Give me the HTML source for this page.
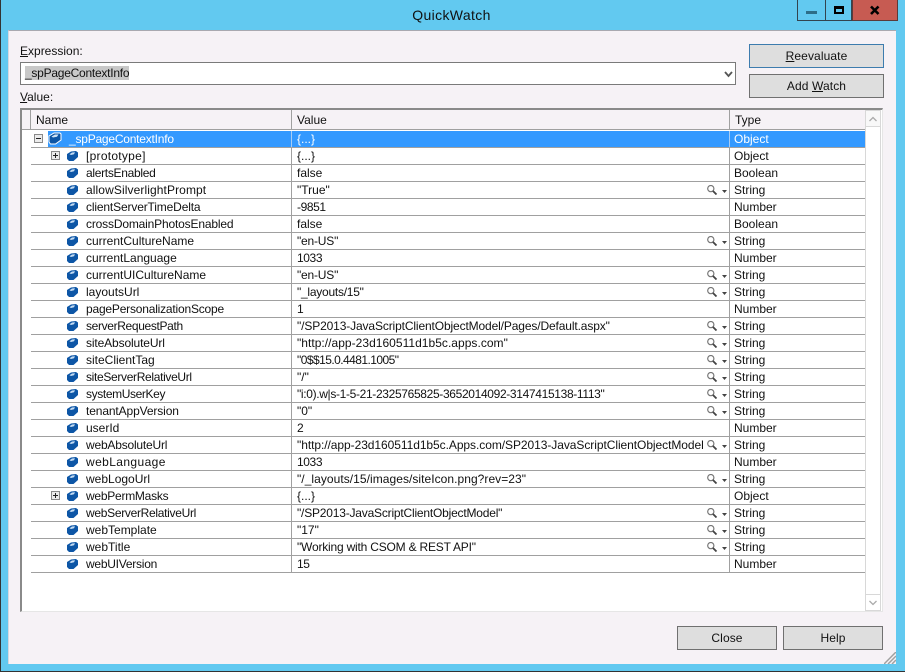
<!DOCTYPE html>
<html><head><meta charset="utf-8"><title>QuickWatch</title>
<style>
html,body{margin:0;padding:0;width:905px;height:672px;overflow:hidden;background:#62c9f0}
*{box-sizing:border-box}
body{font:12px/17px "Liberation Sans",sans-serif;color:#111;position:relative}
.a{position:absolute;white-space:nowrap}
.b{position:absolute;background:#dedede;border:1px solid #707070;text-align:center;height:24px;line-height:23px;letter-spacing:.1px}
.r{position:absolute;left:31px;width:834px;height:17px;border-bottom:1px solid #a0a0a0}
.r span{position:absolute;top:0;white-space:nowrap;line-height:16px}
.n{left:55px}.v{left:266px}.t{left:703px}
.i{position:absolute;left:36px;top:3px;width:11px;height:10px}
.m{position:absolute;left:676px;top:3px;width:20px;height:10px}
.p{position:absolute;left:20px;top:3px;width:9px;height:9px}
.c1{position:absolute;left:260px;top:0;width:1px;height:16px;background:#a0a0a0}
.c2{position:absolute;left:698px;top:0;width:1px;height:16px;background:#a0a0a0}
u{text-decoration:underline}
</style></head><body>
<svg width="0" height="0" style="position:absolute"><defs>
<symbol id="cube" viewBox="0 0 11 10"><path d="M0 3 L4 .5 L9 0 L11 1.500 L11 6 L6.500 10 L2 10 L0 8Z" fill="#0d56a6"/><path d="M2.500 3.200 L5 1.500 L8 1.300 L7 3.200 L4 4Z" fill="#c4dcf3"/></symbol>
<symbol id="cubew" viewBox="0 0 14 13"><path d="M1 4 L6 1 L12 1 L13 2 L13 8 L7.500 12 L2.500 12 L1 10Z" fill="#0d56a6" stroke="#fff"/><path d="M3.500 4.500 L7 2.500 L10.500 2.500 L9 4.800 L5 5.500Z" fill="#cfe3f5"/></symbol>
<symbol id="mag" viewBox="0 0 20 10"><circle cx="3.800" cy="3.600" r="3.100" fill="none" stroke="#777" stroke-width="1.200"/><path d="M6 6 L9.500 9.500" stroke="#444" stroke-width="1.800"/><path d="M15 5 L20 5 L17.500 8Z" fill="#444"/></symbol>
<symbol id="plus" viewBox="0 0 9 9"><rect x=".5" y=".5" width="8" height="8" fill="#ececec" stroke="#8a8a8a"/><path d="M2 4.500H7M4.500 2V7" stroke="#222"/></symbol>
<symbol id="minus" viewBox="0 0 9 9"><rect x=".5" y=".5" width="8" height="8" fill="#ececec" stroke="#8a8a8a"/><path d="M2 4.500H7" stroke="#222"/></symbol>
</defs></svg>

<div class="a" style="left:0;top:0;width:1px;height:672px;background:#333"></div>
<div class="a" style="left:0;top:671px;width:905px;height:1px;background:#333"></div>

<div class="a" style="left:0;top:0;width:905px;text-align:center;font-size:14px;line-height:30px;color:#111;letter-spacing:.35px;padding-right:2px">QuickWatch</div>

<!-- caption buttons -->
<div class="a" style="left:797px;top:0;width:29px;height:21px;border:1px solid #33444f;border-top:0;background:#62c9f0"></div>
<div class="a" style="left:806px;top:11px;width:11px;height:3px;background:#2d6e88"></div>
<div class="a" style="left:825px;top:0;width:27px;height:21px;border:1px solid #33444f;border-top:0"></div>
<div class="a" style="left:834px;top:6px;width:10px;height:8px;border:2px solid #000;border-top-width:3px"></div>
<div class="a" style="left:852px;top:0;width:46px;height:21px;background:#c75b52;border:1px solid #5b3a3a;border-top:0"></div>
<svg class="a" style="left:869px;top:5px" width="11" height="10" viewBox="0 0 11 10"><path d="M2 1.500 L9.500 9 M9.500 1.500 L2 9" stroke="#000" stroke-width="2.600"/></svg>

<!-- client -->
<div class="a" style="left:8px;top:30px;width:888px;height:634px;background:#f6f2f6;border-top:1px solid #a9a9b0;border-left:1px solid #d8d8e0"></div>

<div class="a" style="left:20px;top:43px"><u>E</u>xpression:</div>
<div class="a" style="left:20px;top:62px;width:716px;height:23px;background:#fff;border:1px solid #7a7a7a"></div>
<div class="a" style="left:25px;top:66px;height:14px;line-height:15px;background:#c8c8c8;letter-spacing:-.25px">_spPageContextInfo</div>
<svg class="a" style="left:724px;top:71px" width="9" height="7" viewBox="0 0 9 7"><path d="M1 1 L4.500 5 L8 1" fill="none" stroke="#555" stroke-width="1.800"/></svg>
<div class="a" style="left:20px;top:89px"><u>V</u>alue:</div>

<div class="b" style="left:749px;top:44px;width:135px;height:24px;border-color:#3d7cae"><u>R</u>eevaluate</div>
<div class="b" style="left:749px;top:74px;width:135px;height:24px">Add <u>W</u>atch</div>
<div class="b" style="left:677px;top:626px;width:100px;height:24px">Close</div>
<div class="b" style="left:783px;top:626px;width:100px;height:24px">Help</div>

<!-- table -->
<div class="a" style="left:20px;top:108px;width:863px;height:504px;background:#fff;border-top:2px solid #8a8a8a;border-left:2px solid #8a8a8a;border-right:1px solid #e6e6e6;border-bottom:1px solid #e6e6e6"></div>
<div class="a" style="left:22px;top:110px;width:843px;height:20px;background:#f6f2f6;border-bottom:1px solid #a0a0a0"></div>
<div class="a" style="left:30px;top:110px;width:1px;height:19px;background:#a0a0a0"></div>
<div class="a" style="left:291px;top:110px;width:1px;height:19px;background:#a0a0a0"></div>
<div class="a" style="left:729px;top:110px;width:1px;height:19px;background:#a0a0a0"></div>
<div class="a" style="left:36px;top:112px">Name</div>
<div class="a" style="left:297px;top:112px">Value</div>
<div class="a" style="left:735px;top:112px">Type</div>

<!-- scrollbar -->
<div class="a" style="left:865px;top:110px;width:16px;height:501px;background:#fff;border-left:1px solid #d8d8d8;border-right:1px solid #d8d8d8"></div>
<div class="a" style="left:865px;top:110px;width:16px;height:17px;background:#f8f8f8;border:1px solid #d8d8d8"></div>
<div class="a" style="left:865px;top:594px;width:16px;height:17px;background:#fff;border:1px solid #d8d8d8"></div>
<svg class="a" style="left:869px;top:116px" width="8" height="6" viewBox="0 0 8 6"><path d="M.5 5 L4 1.500 L7.500 5" fill="none" stroke="#aaa" stroke-width="1.300"/></svg>
<svg class="a" style="left:869px;top:600px" width="8" height="6" viewBox="0 0 8 6"><path d="M.5 1 L4 4.500 L7.500 1" fill="none" stroke="#aaa" stroke-width="1.300"/></svg>

<!-- rows -->
<div class="r" style="top:131px;height:17px"><svg class="p" style="left:3px" viewBox="0 0 9 9" width="11" height="11"><use href="#minus"/></svg>
<div class="a" style="left:17px;top:0;width:817px;height:16px;background:#3399ff"></div>
<svg class="i" style="left:17px;top:1px;width:14px;height:13px"><use href="#cubew"/></svg>
<span style="left:38px;color:#fff;letter-spacing:-.22px">_spPageContextInfo</span><div class="c1" style="background:#a8cdf5"></div><span class="v" style="color:#fff">{...}</span><div class="c2" style="background:#a8cdf5"></div><span class="t" style="color:#fff">Object</span></div>

<div class="r" style="top:148px"><svg class="p"><use href="#plus"/></svg><svg class="i"><use href="#cube"/></svg><span class="n" style="letter-spacing:.27px">[prototype]</span><div class="c1"></div><span class="v">{...}</span><div class="c2"></div><span class="t">Object</span></div>
<div class="r" style="top:165px"><svg class="i"><use href="#cube"/></svg><span class="n" style="letter-spacing:-.3px">alertsEnabled</span><div class="c1"></div><span class="v">false</span><div class="c2"></div><span class="t">Boolean</span></div>
<div class="r" style="top:182px"><svg class="i"><use href="#cube"/></svg><span class="n" style="letter-spacing:.1px">allowSilverlightPrompt</span><div class="c1"></div><span class="v">"True"</span><svg class="m"><use href="#mag"/></svg><div class="c2"></div><span class="t">String</span></div>
<div class="r" style="top:199px"><svg class="i"><use href="#cube"/></svg><span class="n" style="letter-spacing:-.15px">clientServerTimeDelta</span><div class="c1"></div><span class="v" style="letter-spacing:-.4px">-9851</span><div class="c2"></div><span class="t">Number</span></div>
<div class="r" style="top:216px"><svg class="i"><use href="#cube"/></svg><span class="n" style="letter-spacing:-.17px">crossDomainPhotosEnabled</span><div class="c1"></div><span class="v">false</span><div class="c2"></div><span class="t">Boolean</span></div>
<div class="r" style="top:233px"><svg class="i"><use href="#cube"/></svg><span class="n">currentCultureName</span><div class="c1"></div><span class="v" style="letter-spacing:-.2px">"en-US"</span><svg class="m"><use href="#mag"/></svg><div class="c2"></div><span class="t">String</span></div>
<div class="r" style="top:250px"><svg class="i"><use href="#cube"/></svg><span class="n">currentLanguage</span><div class="c1"></div><span class="v" style="letter-spacing:-.4px">1033</span><div class="c2"></div><span class="t">Number</span></div>
<div class="r" style="top:267px"><svg class="i"><use href="#cube"/></svg><span class="n">currentUICultureName</span><div class="c1"></div><span class="v" style="letter-spacing:-.2px">"en-US"</span><svg class="m"><use href="#mag"/></svg><div class="c2"></div><span class="t">String</span></div>
<div class="r" style="top:284px"><svg class="i"><use href="#cube"/></svg><span class="n">layoutsUrl</span><div class="c1"></div><span class="v" style="letter-spacing:-.25px">"_layouts/15"</span><svg class="m"><use href="#mag"/></svg><div class="c2"></div><span class="t">String</span></div>
<div class="r" style="top:301px"><svg class="i"><use href="#cube"/></svg><span class="n" style="letter-spacing:-.2px">pagePersonalizationScope</span><div class="c1"></div><span class="v">1</span><div class="c2"></div><span class="t">Number</span></div>
<div class="r" style="top:318px"><svg class="i"><use href="#cube"/></svg><span class="n" style="letter-spacing:-.35px">serverRequestPath</span><div class="c1"></div><span class="v" style="letter-spacing:-.13px">"/SP2013-JavaScriptClientObjectModel/Pages/Default.aspx"</span><svg class="m"><use href="#mag"/></svg><div class="c2"></div><span class="t">String</span></div>
<div class="r" style="top:335px"><svg class="i"><use href="#cube"/></svg><span class="n" style="letter-spacing:-.13px">siteAbsoluteUrl</span><div class="c1"></div><span class="v" style="letter-spacing:.03px">"http://app-23d160511d1b5c.apps.com"</span><svg class="m"><use href="#mag"/></svg><div class="c2"></div><span class="t">String</span></div>
<div class="r" style="top:352px"><svg class="i"><use href="#cube"/></svg><span class="n">siteClientTag</span><div class="c1"></div><span class="v" style="letter-spacing:-.55px">"0$$15.0.4481.1005"</span><svg class="m"><use href="#mag"/></svg><div class="c2"></div><span class="t">String</span></div>
<div class="r" style="top:369px"><svg class="i"><use href="#cube"/></svg><span class="n" style="letter-spacing:-.33px">siteServerRelativeUrl</span><div class="c1"></div><span class="v">"/"</span><svg class="m"><use href="#mag"/></svg><div class="c2"></div><span class="t">String</span></div>
<div class="r" style="top:386px"><svg class="i"><use href="#cube"/></svg><span class="n" style="letter-spacing:-.38px">systemUserKey</span><div class="c1"></div><span class="v" style="letter-spacing:-.34px">"i:0).w|s-1-5-21-2325765825-3652014092-3147415138-1113"</span><svg class="m"><use href="#mag"/></svg><div class="c2"></div><span class="t">String</span></div>
<div class="r" style="top:403px"><svg class="i"><use href="#cube"/></svg><span class="n" style="letter-spacing:-.12px">tenantAppVersion</span><div class="c1"></div><span class="v">"0"</span><svg class="m"><use href="#mag"/></svg><div class="c2"></div><span class="t">String</span></div>
<div class="r" style="top:420px"><svg class="i"><use href="#cube"/></svg><span class="n">userId</span><div class="c1"></div><span class="v">2</span><div class="c2"></div><span class="t">Number</span></div>
<div class="r" style="top:437px"><svg class="i"><use href="#cube"/></svg><span class="n" style="letter-spacing:-.2px">webAbsoluteUrl</span><div class="c1"></div><span class="v" style="width:410px;overflow:hidden;letter-spacing:-.06px">"http://app-23d160511d1b5c.Apps.com/SP2013-JavaScriptClientObjectModel</span><svg class="m"><use href="#mag"/></svg><div class="c2"></div><span class="t">String</span></div>
<div class="r" style="top:454px"><svg class="i"><use href="#cube"/></svg><span class="n" style="letter-spacing:.4px">webLanguage</span><div class="c1"></div><span class="v" style="letter-spacing:-.4px">1033</span><div class="c2"></div><span class="t">Number</span></div>
<div class="r" style="top:471px"><svg class="i"><use href="#cube"/></svg><span class="n">webLogoUrl</span><div class="c1"></div><span class="v" style="letter-spacing:.05px">"/_layouts/15/images/siteIcon.png?rev=23"</span><svg class="m"><use href="#mag"/></svg><div class="c2"></div><span class="t">String</span></div>
<div class="r" style="top:488px"><svg class="p"><use href="#plus"/></svg><svg class="i"><use href="#cube"/></svg><span class="n" style="letter-spacing:-.25px">webPermMasks</span><div class="c1"></div><span class="v">{...}</span><div class="c2"></div><span class="t">Object</span></div>
<div class="r" style="top:505px"><svg class="i"><use href="#cube"/></svg><span class="n" style="letter-spacing:-.3px">webServerRelativeUrl</span><div class="c1"></div><span class="v" style="letter-spacing:-.2px">"/SP2013-JavaScriptClientObjectModel"</span><svg class="m"><use href="#mag"/></svg><div class="c2"></div><span class="t">String</span></div>
<div class="r" style="top:522px"><svg class="i"><use href="#cube"/></svg><span class="n">webTemplate</span><div class="c1"></div><span class="v">"17"</span><svg class="m"><use href="#mag"/></svg><div class="c2"></div><span class="t">String</span></div>
<div class="r" style="top:539px"><svg class="i"><use href="#cube"/></svg><span class="n">webTitle</span><div class="c1"></div><span class="v" style="letter-spacing:-.2px">"Working with CSOM &amp; REST API"</span><svg class="m"><use href="#mag"/></svg><div class="c2"></div><span class="t">String</span></div>
<div class="r" style="top:556px"><svg class="i"><use href="#cube"/></svg><span class="n" style="letter-spacing:-.25px">webUIVersion</span><div class="c1"></div><span class="v" style="letter-spacing:-.4px">15</span><div class="c2"></div><span class="t">Number</span></div>

<!-- grip -->
<svg class="a" style="left:884px;top:652px" width="12" height="12" viewBox="0 0 12 12"><path d="M0 12L12 0M4 12L12 4M8 12L12 8" stroke="#a0a0a0" stroke-width="1.500"/></svg>
</body></html>
